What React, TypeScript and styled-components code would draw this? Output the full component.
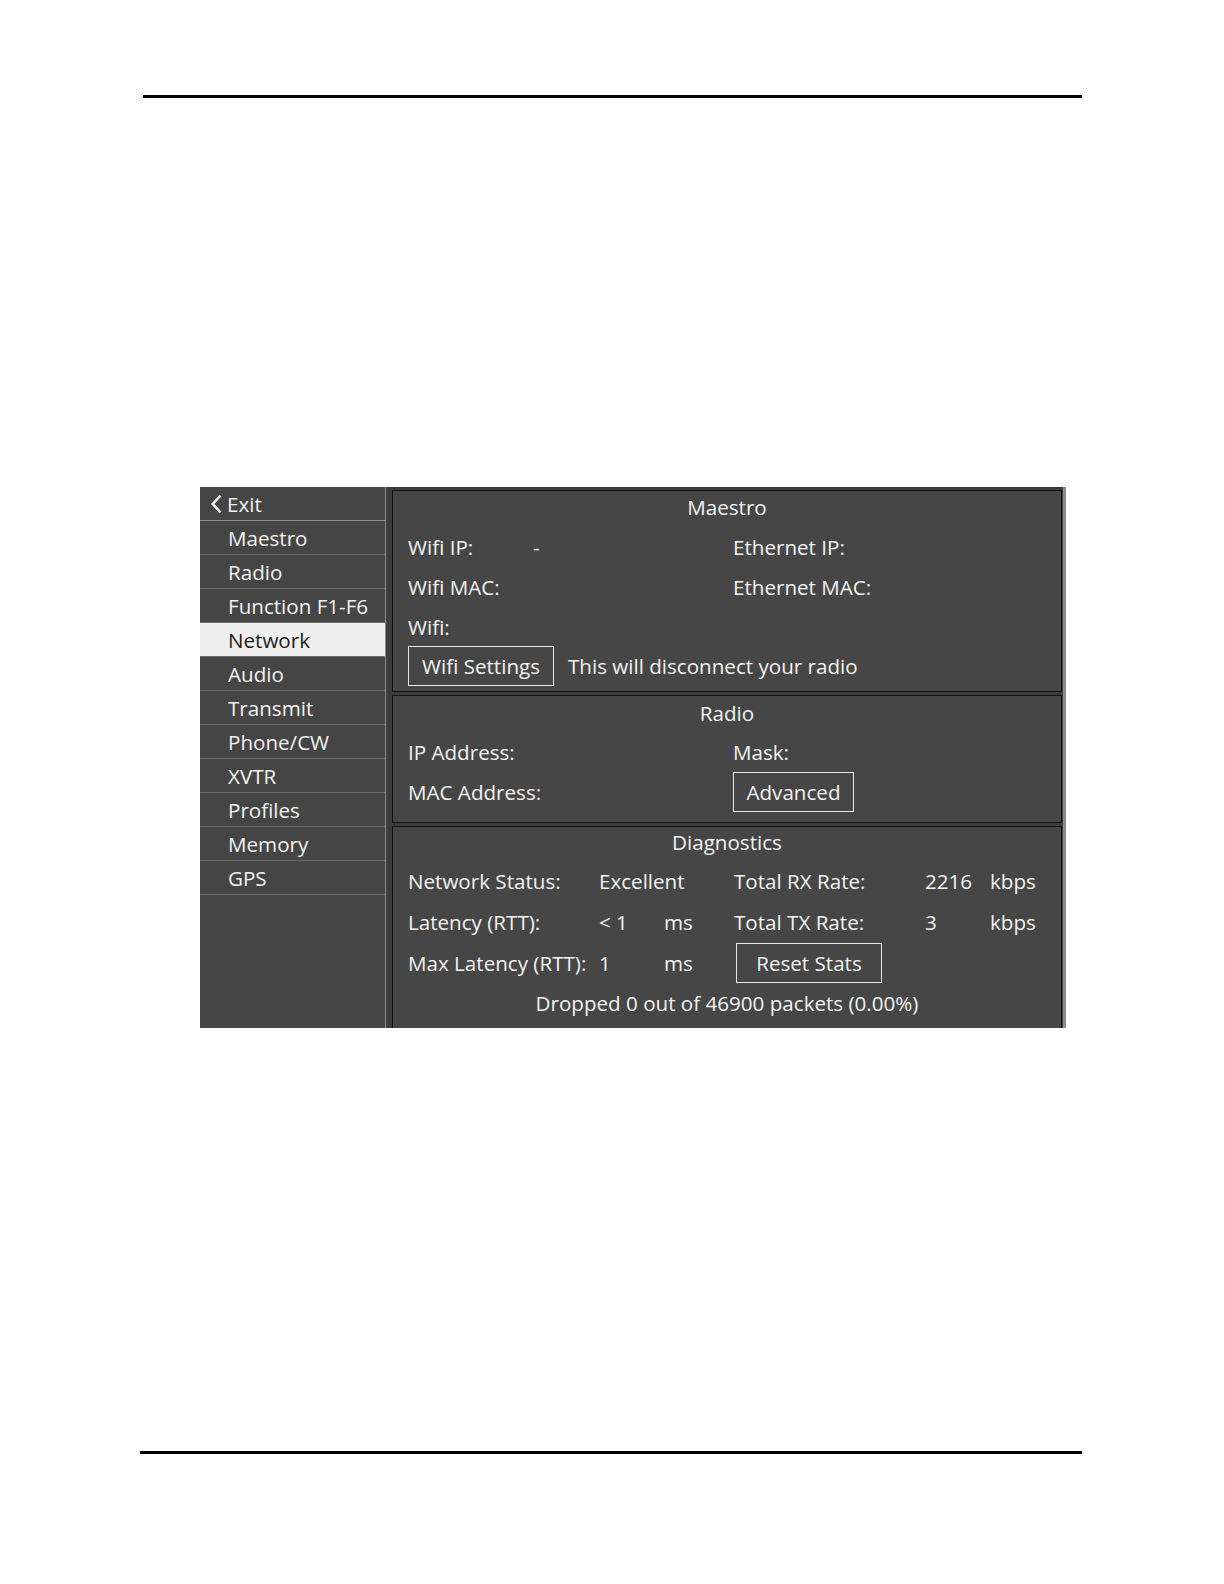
import styled, { createGlobalStyle } from "styled-components";

const GlobalStyle = createGlobalStyle`
  html, body {
    margin: 0;
    padding: 0;
    background: #ffffff;
  }
  body {
    font-family: "Open Sans", "Noto Sans", sans-serif;
  }
`;

const menuItems = [
  "Maestro",
  "Radio",
  "Function F1-F6",
  "Network",
  "Audio",
  "Transmit",
  "Phone/CW",
  "XVTR",
  "Profiles",
  "Memory",
  "GPS",
];

const App = () => {
  return (
    <Page>
      <GlobalStyle />
      <Rule $top={95} $left={143} $width={939} />
      <Shot>
        <Sidebar>
          <ExitItem>
            <svg width="13" height="20" viewBox="0 0 13 20">
              <path d="M10.5 1.5 L2.8 10 L10.5 18.5" fill="none" stroke="#f2f2f2" strokeWidth="2.6" />
            </svg>
            Exit
          </ExitItem>
          {menuItems.map((item) => (
            <SideItem key={item} $active={item === "Network"}>
              {item}
            </SideItem>
          ))}
        </Sidebar>
        <Column>
          <Panel>
            <Header $h={32}>Maestro</Header>
            <Body $top={4}>
              <Row $cols="125px 200px 1fr" $h={40}>
                <span>Wifi IP:</span>
                <span>-</span>
                <span>Ethernet IP:</span>
              </Row>
              <Row $cols="325px 1fr" $h={40}>
                <span>Wifi MAC:</span>
                <span>Ethernet MAC:</span>
              </Row>
              <Row $cols="1fr" $h={39}>
                <span>Wifi:</span>
              </Row>
              <ButtonRow>
                <Button $w={146}>Wifi Settings</Button>
                <span>This will disconnect your radio</span>
              </ButtonRow>
            </Body>
          </Panel>
          <Panel $pb={10}>
            <Header $h={34}>Radio</Header>
            <Body $top={2}>
              <Row $cols="325px 1fr" $h={40}>
                <span>IP Address:</span>
                <span>Mask:</span>
              </Row>
              <Row $cols="325px 1fr" $h={40}>
                <span>MAC Address:</span>
                <Button $w={121}>Advanced</Button>
              </Row>
            </Body>
          </Panel>
          <Panel $grow>
            <Header $h={31}>Diagnostics</Header>
            <Body $top={2}>
              <Row $cols="191px 65px 70px 191px 65px 1fr" $h={41}>
                <span>Network Status:</span>
                <span>Excellent</span>
                <span />
                <span>Total RX Rate:</span>
                <span>2216</span>
                <span>kbps</span>
              </Row>
              <Row $cols="191px 65px 70px 191px 65px 1fr" $h={41}>
                <span>Latency (RTT):</span>
                <span>&lt; 1</span>
                <span>ms</span>
                <span>Total TX Rate:</span>
                <span>3</span>
                <span>kbps</span>
              </Row>
              <Row $cols="191px 65px 72px 1fr" $h={41}>
                <span>Max Latency (RTT):</span>
                <span>1</span>
                <span>ms</span>
                <Button $w={146}>Reset Stats</Button>
              </Row>
              <Dropped>Dropped 0 out of 46900 packets (0.00%)</Dropped>
            </Body>
          </Panel>
        </Column>
        <Scroll />
      </Shot>
      <Rule $top={423} $left={140} $width={942} />
    </Page>
  );
};

export default App;

const Page = styled.div`
  width: 1224px;
  height: 1584px;
  overflow: hidden;
  display: flow-root;
`;

const Rule = styled.div<{ $top: number; $left: number; $width: number }>`
  margin-top: ${(p) => p.$top}px;
  margin-left: ${(p) => p.$left}px;
  width: ${(p) => p.$width}px;
  height: 3px;
  background: #000;
`;

const Shot = styled.div`
  display: flex;
  margin-top: 389px;
  margin-left: 200px;
  width: 866px;
  height: 541px;
  background: #3d3d3d;
  overflow: hidden;
  color: #f2f2f2;
  font-size: 20.6px;
`;

const Sidebar = styled.div`
  width: 185px;
  flex-shrink: 0;
  display: flex;
  flex-direction: column;
  background: #454545;
  border-right: 1px solid #8e8e8e;
`;

const SideItem = styled.div<{ $active?: boolean }>`
  height: 33px;
  display: flex;
  align-items: center;
  padding-left: 28px;
  border-bottom: 1px solid #6e6e6e;
  background: ${(p) => (p.$active ? "#efefef" : "transparent")};
  color: ${(p) => (p.$active ? "#1c1c1c" : "#f2f2f2")};
`;

const ExitItem = styled(SideItem)`
  padding-left: 10px;
  gap: 4px;
  border-bottom-color: #8a8a8a;
`;

const Column = styled.div`
  width: 670px;
  flex-shrink: 0;
  margin-left: 6px;
  padding-top: 3px;
  display: flex;
  flex-direction: column;
  gap: 3px;
`;

const Panel = styled.div<{ $grow?: boolean; $pb?: number }>`
  background: #464646;
  border: 1px solid #121212;
  flex: ${(p) => (p.$grow ? "1" : "none")};
  padding-bottom: ${(p) => p.$pb ?? 5}px;
`;

const Header = styled.div<{ $h: number }>`
  height: ${(p) => p.$h}px;
  line-height: ${(p) => p.$h}px;
  text-align: center;
`;

const Body = styled.div<{ $top: number }>`
  padding: ${(p) => p.$top}px 15px 0;
`;

const Row = styled.div<{ $cols: string; $h: number }>`
  display: grid;
  grid-template-columns: ${(p) => p.$cols};
  align-items: center;
  height: ${(p) => p.$h}px;
  white-space: nowrap;
`;

const ButtonRow = styled.div`
  display: flex;
  align-items: center;
  gap: 14px;
  height: 40px;
  white-space: nowrap;
`;

const Button = styled.div<{ $w: number }>`
  box-sizing: border-box;
  width: ${(p) => p.$w}px;
  height: 40px;
  display: flex;
  align-items: center;
  justify-content: center;
  border: 1.6px solid #e8e8e8;
  white-space: nowrap;
`;

const Dropped = styled.div`
  height: 41px;
  line-height: 41px;
  text-align: center;
`;

const Scroll = styled.div`
  width: 4px;
  flex-shrink: 0;
  margin-left: 1px;
  background: #8c8c8c;
`;
